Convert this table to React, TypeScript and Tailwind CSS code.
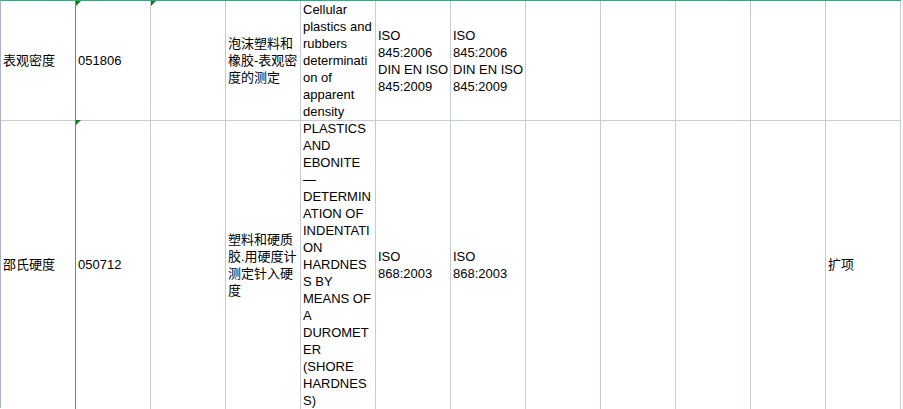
import React from "react";

type Cell = { text?: string; flag?: boolean };

const COLS = 12;

const ROWS: { height: string; cells: Cell[] }[] = [
  {
    height: "h-[119px]",
    cells: [
      { text: "表观密度" },
      { text: "051806", flag: true },
      { flag: true },
      { text: "泡沫塑料和橡胶-表观密度的测定" },
      { text: "Cellular plastics and rubbers determination of apparent density" },
      { text: "ISO 845:2006 DIN EN ISO 845:2009" },
      { text: "ISO 845:2006 DIN EN ISO 845:2009" },
    ],
  },
  {
    height: "h-[288px]",
    cells: [
      { text: "邵氏硬度" },
      { text: "050712", flag: true },
      {},
      { text: "塑料和硬质胶.用硬度计测定针入硬度" },
      {
        text: "PLASTICS AND EBONITE — DETERMINATION OF INDENTATION HARDNESS BY MEANS OF A DUROMETER (SHORE HARDNESS)",
      },
      { text: "ISO 868:2003" },
      { text: "ISO 868:2003" },
      {},
      {},
      {},
      {},
      { text: "扩项" },
    ],
  },
];

function Flag() {
  return (
    <svg className="absolute left-0 top-0" width="6" height="6" viewBox="0 0 6 6">
      <polygon points="0,0 5,0 0,5" fill="#0f7a12" />
    </svg>
  );
}

export default function App() {
  return (
    <div
      className="w-[903px] h-[409px] bg-white text-[13px] leading-[17px] text-black"
      style={{ fontFamily: '"Liberation Sans", "Noto Sans CJK SC", sans-serif' }}
    >
      <div className="w-[901px] border-l border-t border-l-[#a9b2c9] border-t-[#22b07c]">
        {ROWS.map((row, r) => (
          <div key={r} className={`grid grid-cols-[repeat(12,75px)] ${row.height}`}>
            {Array.from({ length: COLS }).map((_, c) => {
              const cell = row.cells[c] ?? {};
              return (
                <div
                  key={c}
                  className={`relative flex items-center overflow-visible border-b border-r border-b-[#c6cbda] pl-[2px] pr-[1px] ${
                    c === 0 ? "border-r-[#22b07c]" : "border-r-[#c6cbda]"
                  }`}
                >
                  {cell.flag && <Flag />}
                  {cell.text && <div className="w-[71px] break-words">{cell.text}</div>}
                </div>
              );
            })}
          </div>
        ))}
      </div>
    </div>
  );
}
